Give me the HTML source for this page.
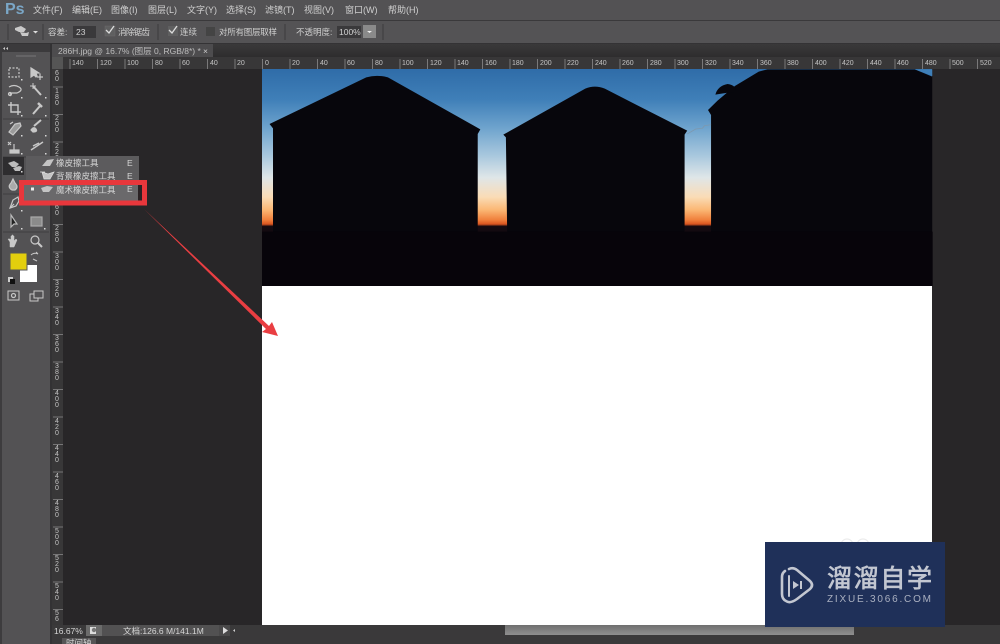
<!DOCTYPE html>
<html lang="zh"><head><meta charset="utf-8"><title>Photoshop</title>
<style>
html,body{margin:0;padding:0;width:1000px;height:644px;overflow:hidden;background:#282628}
body{position:relative;font-family:"Liberation Sans","Noto Sans CJK SC",sans-serif}
svg{position:absolute;left:0;top:0}
text{font-family:"Liberation Sans","Noto Sans CJK SC",sans-serif}
</style></head><body>
<svg width="1000" height="644" viewBox="0 0 1000 644" xmlns="http://www.w3.org/2000/svg">
<defs>
<linearGradient id="sky" x1="0" y1="0" x2="0" y2="1">
<stop offset="0" stop-color="#2f6ca8"/><stop offset=".14" stop-color="#3f7fb8"/><stop offset=".27" stop-color="#6ea3cd"/><stop offset=".4" stop-color="#a9c8de"/><stop offset=".5" stop-color="#dfe6e8"/><stop offset=".59" stop-color="#fadcb6"/><stop offset=".65" stop-color="#fbb673"/><stop offset=".695" stop-color="#f0803c"/><stop offset=".715" stop-color="#d9541f"/><stop offset=".725" stop-color="#140a10"/><stop offset="1" stop-color="#07040a"/>
</linearGradient>
<linearGradient id="tabbar" x1="0" y1="0" x2="0" y2="1"><stop offset="0" stop-color="#3a393a"/><stop offset="1" stop-color="#2e2d2e"/></linearGradient>
<linearGradient id="thumb" x1="0" y1="0" x2="0" y2="1"><stop offset="0" stop-color="#6f6f6f"/><stop offset="1" stop-color="#8f8f8f"/></linearGradient>
</defs>

<!-- canvas area -->
<rect x="0" y="0" width="1000" height="644" fill="#282628"/>

<!-- image -->
<rect x="262" y="69" width="670" height="556" fill="#fff"/>
<rect x="262" y="69" width="670" height="217" fill="url(#sky)"/>
<g transform="translate(260 60) scale(.4337 .33333)" fill="#07060c">
<path d="M30 205L22 192 245 52Q270 43 295 52L508 208 502 222 502 540 30 540Z"/>
<path d="M567 232L561 224 750 86Q772 74 795 86L985 212 979 224 979 520 570 525Z"/>
<path d="M1040 520L1040 165 1033 150 1055 122 1095 78 1150 35 1170 28 1510 28 1550 50 1550 520Z"/>
<path d="M1050 104Q1055 78 1078 72Q1100 76 1095 96Q1075 98 1050 104Z"/>
<rect x="5" y="515" width="1546" height="163" fill="#07040a"/>
<path d="M985 222L1005 207 1020 205 1025 197 1040 194" stroke="#7f97ab" stroke-width="2" fill="none"/>
<path d="M1510 28L1550 48V28Z" fill="#3f7fb8"/>
</g>

<!-- faint marks on white -->
<g fill="none" stroke="#ececec" stroke-width="1.200"><circle cx="847" cy="545" r="6"/><circle cx="863" cy="545" r="6"/></g>

<!-- top bars -->
<rect x="0" y="0" width="1000" height="20" fill="#535254"/>
<rect x="0" y="20" width="1000" height="1" fill="#3a393b"/>
<rect x="0" y="21" width="1000" height="22" fill="#545355"/>
<rect x="0" y="43" width="1000" height="1" fill="#343335"/>
<rect x="0" y="44" width="1000" height="13" fill="url(#tabbar)"/>
<rect x="52" y="44" width="161" height="13" fill="#4d4c4e"/>
<rect x="73" y="26" width="23" height="12" fill="#3a393b"/>
<rect x="337" y="26" width="24" height="12" fill="#3a393b"/>
<text x="5" y="14" font-size="16" font-weight="bold" fill="#7ba7c7">Ps</text>
<g font-size="9" fill="#d0d0d0">
<text x="33" y="13">文件(F)</text><text x="72" y="13">编辑(E)</text><text x="111" y="13">图像(I)</text><text x="148" y="13">图层(L)</text><text x="187" y="13">文字(Y)</text><text x="226" y="13">选择(S)</text><text x="265" y="13">滤镜(T)</text><text x="304" y="13">视图(V)</text><text x="345" y="13">窗口(W)</text><text x="388" y="13">帮助(H)</text>
</g>
<g font-size="8.500" fill="#d0d0d0">
<text x="48" y="35">容差:</text>
<text x="76" y="35">23</text>
<text x="118" y="35" textLength="32">消除锯齿</text>
<text x="180" y="35">连续</text>
<text x="219" y="35" textLength="58">对所有图层取样</text>
<text x="296" y="35">不透明度:</text>
<text x="339" y="35">100%</text>
<text x="58" y="54" fill="#bdbdbd">286H.jpg @ 16.7% (图层 0, RGB/8*) *</text>
<text x="203" y="54" fill="#ccc">×</text>
</g>
<rect x="363" y="25" width="13" height="13" fill="#8a8a8a"/>
<path d="M367 31h5l-2.500 2z" fill="#eee"/>
<rect x="105" y="26" width="10" height="10" fill="#5f5f60" stroke="#6b6b6c" stroke-width=".5"/>
<path d="M106 30l3 3 5-7" stroke="#ddd" stroke-width="1.300" fill="none"/>
<rect x="168" y="26" width="10" height="10" fill="#5f5f60"/>
<path d="M169 30l3 3 5-7" stroke="#ddd" stroke-width="1.300" fill="none"/>
<rect x="206" y="27" width="9" height="9" fill="#444"/>
<g stroke="#3c3b3d"><path d="M43 24v16M158 24v16M285 24v16M383 24v16M8 24v16"/></g>
<path d="M15 28l6-2 5 3-2 3h-5l-4-2zM20 32l6 1 3-1-1 4h-6z" fill="#c9c9c9"/>
<path d="M33 31h5l-2.500 2.500z" fill="#ddd"/>

<!-- rulers -->
<rect x="52" y="57" width="948" height="12" fill="#383738"/>
<rect x="52" y="57" width="11" height="12" fill="#555"/>
<rect x="52" y="69" width="11" height="556" fill="#383738"/>
<g fill="none" stroke="#8a8a8a" stroke-width=".8"><path d="M70 59v10M97.5 59v10M125 59v10M152.500 59v10M180 59v10M207.500 59v10M235 59v10M262.500 59v10M290 59v10M317.500 59v10M345 59v10M372.500 59v10M400 59v10M427.500 59v10M455 59v10M482.500 59v10M510 59v10M537.500 59v10M565 59v10M592.500 59v10M620 59v10M647.500 59v10M675 59v10M702.500 59v10M730 59v10M757.500 59v10M785 59v10M812.500 59v10M840 59v10M867.500 59v10M895 59v10M922.500 59v10M950 59v10M977.500 59v10"/>
<path d="M53 87h10M53 114.500h10M53 142h10M53 169.500h10M53 197h10M53 224.500h10M53 252h10M53 279.500h10M53 307h10M53 334.500h10M53 362h10M53 389.500h10M53 417h10M53 444.500h10M53 472h10M53 499.500h10M53 527h10M53 554.500h10M53 582h10M53 609.500h10"/></g>
<g font-size="7" fill="#c4c4c4">
<text x="72" y="65">140</text><text x="100" y="65">120</text><text x="127" y="65">100</text><text x="155" y="65">80</text><text x="182" y="65">60</text><text x="210" y="65">40</text><text x="237" y="65">20</text><text x="265" y="65">0</text><text x="292" y="65">20</text><text x="320" y="65">40</text><text x="347" y="65">60</text><text x="375" y="65">80</text><text x="402" y="65">100</text><text x="430" y="65">120</text><text x="457" y="65">140</text><text x="485" y="65">160</text><text x="512" y="65">180</text><text x="540" y="65">200</text><text x="567" y="65">220</text><text x="595" y="65">240</text><text x="622" y="65">260</text><text x="650" y="65">280</text><text x="677" y="65">300</text><text x="705" y="65">320</text><text x="732" y="65">340</text><text x="760" y="65">360</text><text x="787" y="65">380</text><text x="815" y="65">400</text><text x="842" y="65">420</text><text x="870" y="65">440</text><text x="897" y="65">460</text><text x="925" y="65">480</text><text x="952" y="65">500</text><text x="980" y="65">520</text>
</g>
<g font-size="7" fill="#c4c4c4" text-anchor="middle">
<text x="57" y="75">6</text><text x="57" y="81">0</text>
<text x="57" y="93">1</text><text x="57" y="99">8</text><text x="57" y="105">0</text>
<text x="57" y="120">2</text><text x="57" y="126">0</text><text x="57" y="132">0</text>
<text x="57" y="148">2</text><text x="57" y="154">2</text><text x="57" y="160">0</text>
<text x="57" y="175">2</text><text x="57" y="181">4</text><text x="57" y="187">0</text>
<text x="57" y="203">2</text><text x="57" y="209">6</text><text x="57" y="215">0</text>
<text x="57" y="230">2</text><text x="57" y="236">8</text><text x="57" y="242">0</text>
<text x="57" y="258">3</text><text x="57" y="264">0</text><text x="57" y="270">0</text>
<text x="57" y="285">3</text><text x="57" y="291">2</text><text x="57" y="297">0</text>
<text x="57" y="313">3</text><text x="57" y="319">4</text><text x="57" y="325">0</text>
<text x="57" y="340">3</text><text x="57" y="346">6</text><text x="57" y="352">0</text>
<text x="57" y="368">3</text><text x="57" y="374">8</text><text x="57" y="380">0</text>
<text x="57" y="395">4</text><text x="57" y="401">0</text><text x="57" y="407">0</text>
<text x="57" y="423">4</text><text x="57" y="429">2</text><text x="57" y="435">0</text>
<text x="57" y="450">4</text><text x="57" y="456">4</text><text x="57" y="462">0</text>
<text x="57" y="478">4</text><text x="57" y="484">6</text><text x="57" y="490">0</text>
<text x="57" y="505">4</text><text x="57" y="511">8</text><text x="57" y="517">0</text>
<text x="57" y="533">5</text><text x="57" y="539">0</text><text x="57" y="545">0</text>
<text x="57" y="560">5</text><text x="57" y="566">2</text><text x="57" y="572">0</text>
<text x="57" y="588">5</text><text x="57" y="594">4</text><text x="57" y="600">0</text>
<text x="57" y="615">5</text><text x="57" y="621">6</text>
</g>

<!-- left toolbar -->
<rect x="0" y="44" width="2" height="600" fill="#3d3c3e"/>
<rect x="2" y="44" width="48" height="600" fill="#535254"/>
<rect x="50" y="44" width="2" height="600" fill="#333234"/>
<rect x="2" y="44" width="48" height="8" fill="#3b3a3c"/>
<path d="M5 47l-2 1.500 2 1.500zM8 47l-2 1.500 2 1.500z" fill="#ccc"/>
<path d="M16 56h20" stroke="#777" stroke-width="1"/>
<g stroke="#3f3e40"><path d="M3 119h46M3 157h46M3 232h46M3 194h46"/></g>

<g fill="none" stroke="#c8c8c8" stroke-width="1.200">
<rect x="9" y="68" width="10" height="9" stroke-dasharray="2 1.500"/>
<path d="M31 68v9l3-2 2 2 1-1-1-3h3z" fill="#c8c8c8"/><path d="M40 74v6M37 77h6"/>
<path d="M9 87q5-3 10 0t-2 6h-5q-3 0-1 3"/><circle cx="10" cy="94" r="1.500"/>
<path d="M33 86l8 9" stroke-width="2"/><path d="M30 86h6M33 83v6" stroke-width="1"/>
<path d="M11 102v10h10M8 105h10v10" stroke-width="1.400"/>
<path d="M33 114l7-8" stroke-width="2"/><path d="M38 103l4 4" stroke-width="2.500"/>
<path d="M9 132l6-8 5-1 1 3-8 9z" fill="#9b9b9b"/><path d="M10 124l3-2"/>
<path d="M34 126l7-6" stroke-width="2"/><path d="M31 130q3-4 5-1t-3 3z" fill="#c8c8c8"/>
<path d="M10 150h9v3h-9zM14 150v-6" fill="#c8c8c8"/><path d="M8 142l3 3M11 142l-3 3"/>
<path d="M31 150l12-8M33 146l6-3" stroke-width="1.500"/>
<path d="M12 190q-5-3-1-7l2-4 2 4q4 4 0 7z" fill="#aaa"/>
<path d="M10 208l3-8 5-3 1 4-3 5z"/><path d="M10 208l4-4"/>
<path d="M11 215v12l3-3 3 0z" stroke="#bbb" fill="#222"/>
<rect x="31" y="217" width="11" height="9" fill="#8b8b8b" stroke="#aaa"/>
<path d="M10 247v-5l-2-3 2 0 1 1v-4h1v4-5h1v5-4h1v5l2-2 1 1-3 7z" fill="#c8c8c8" stroke-width=".5"/>
<circle cx="35" cy="240" r="4"/><path d="M38 243l4 4" stroke-width="2"/>
<rect x="8" y="291" width="11" height="9" stroke-width="1"/><circle cx="13.500" cy="295.500" r="2"/>
<rect x="30" y="294" width="8" height="7" stroke-width="1"/><rect x="34" y="291" width="9" height="7" stroke-width="1" fill="#535254"/>
<path d="M31 255q3-3 7-1M38 254l-2-2M37 261l-4 -2" stroke-width="1"/>
</g>
<g fill="#d8d8d8"><rect x="21" y="79" width="1.500" height="1.500"/><rect x="21" y="97" width="1.500" height="1.500"/><rect x="21" y="115" width="1.500" height="1.500"/><rect x="45" y="97" width="1.500" height="1.500"/><rect x="45" y="115" width="1.500" height="1.500"/><rect x="21" y="135" width="1.500" height="1.500"/><rect x="45" y="135" width="1.500" height="1.500"/><rect x="21" y="153" width="1.500" height="1.500"/><rect x="45" y="153" width="1.500" height="1.500"/><rect x="21" y="210" width="1.500" height="1.500"/><rect x="21" y="228" width="1.500" height="1.500"/><rect x="44" y="228" width="1.500" height="1.500"/></g>

<!-- selected eraser -->
<rect x="3" y="157" width="21" height="18" fill="#2e2d2f"/>
<path d="M8 163l6-2 5 3-3 3h-4zM13 168l6-2 3 1-2 4h-5z" fill="#bcbcbc"/>
<rect x="21" y="171" width="1.500" height="1.500" fill="#ddd"/>

<!-- swatches -->
<rect x="20" y="265" width="17" height="17" fill="#fff"/>
<rect x="10" y="253" width="17" height="17" fill="#e3cf0d" stroke="#555" stroke-width="1"/>
<rect x="8" y="277" width="5" height="5" fill="#ccc"/><rect x="10" y="279" width="5" height="5" fill="#111"/>

<!-- flyout -->
<rect x="26" y="156" width="113" height="47" fill="#5c5b5d"/>
<rect x="24" y="184" width="118" height="17" fill="#6a696b"/>
<g font-size="8.500" fill="#d6d6d6">
<text x="56" y="166">橡皮擦工具</text><text x="127" y="166">E</text>
<text x="56" y="179">背景橡皮擦工具</text><text x="127" y="179">E</text>
<text x="56" y="193">魔术橡皮擦工具</text><text x="127" y="192">E</text>
</g>
<path d="M42 166l5-6 7-1-4 7z" fill="#c4c4c4"/>
<path d="M42 172l6 2 6-2-4 7h-6zM40 172h5" fill="#c4c4c4" stroke="#ddd" stroke-width=".7"/>
<path d="M41 188l6-2 6 1-4 5-6 0z" fill="#c4c4c4"/>
<rect x="31" y="187.500" width="3" height="3" fill="#eee"/>
<rect x="138" y="184" width="4" height="17" fill="#2a2224"/>
<rect x="21.500" y="182.500" width="123" height="20.500" fill="none" stroke="#e8373c" stroke-width="5"/>

<!-- arrow -->
<path d="M144 209L269 326 272 322 278 336 262 332 266 329Z" fill="#e93e42"/>

<!-- scroll/status -->
<rect x="52" y="625" width="948" height="11" fill="#3a393a"/>
<rect x="505" y="625" width="349" height="10" fill="url(#thumb)"/>
<rect x="86" y="625" width="144" height="11" fill="#525152"/>
<rect x="86" y="625" width="16" height="11" fill="#6b6b6b"/>
<rect x="90" y="627" width="6" height="7" fill="#ddd"/><circle cx="94" cy="630" r="2.200" fill="#777"/>
<rect x="219" y="625" width="11" height="11" fill="#4a494a"/>
<path d="M223 627v7l5-3.500z" fill="#ddd"/><path d="M235 629v3l-2-1.500z" fill="#ccc"/>
<rect x="52" y="636" width="948" height="8" fill="#3a393a"/>
<rect x="62" y="638" width="34" height="6" fill="#565556"/>
<g font-size="8.500" fill="#d6d6d6"><text x="54" y="634">16.67%</text><text x="123" y="634">文档:126.6 M/141.1M</text><text x="66" y="646">时间轴</text></g>

<!-- watermark -->
<rect x="765" y="542" width="180" height="85" fill="#1f3059"/>
<g fill="none" stroke="#c3c7d1" stroke-width="2.600" stroke-linejoin="round" stroke-linecap="round">
<path d="M789 569Q793 567 797 570L810 581Q814 585 810 589L797 599Q790 604 786 601Q782 599 782 594V577Q782 573 785 571"/>
<path d="M789 576V596" stroke-width="2"/>
</g>
<path d="M793 581l6 4-6 4z" fill="#c3c7d1"/><rect x="800" y="581" width="2" height="8" fill="#c3c7d1"/>
<text x="827" y="587" font-size="25" fill="#c3c7d1" stroke="#c3c7d1" stroke-width=".7" textLength="105" lengthAdjust="spacing">溜溜自学</text>
<text x="827" y="602" font-size="10" fill="#aab0c0" textLength="104" lengthAdjust="spacing">ZIXUE.3066.COM</text>
</svg>
</body></html>
